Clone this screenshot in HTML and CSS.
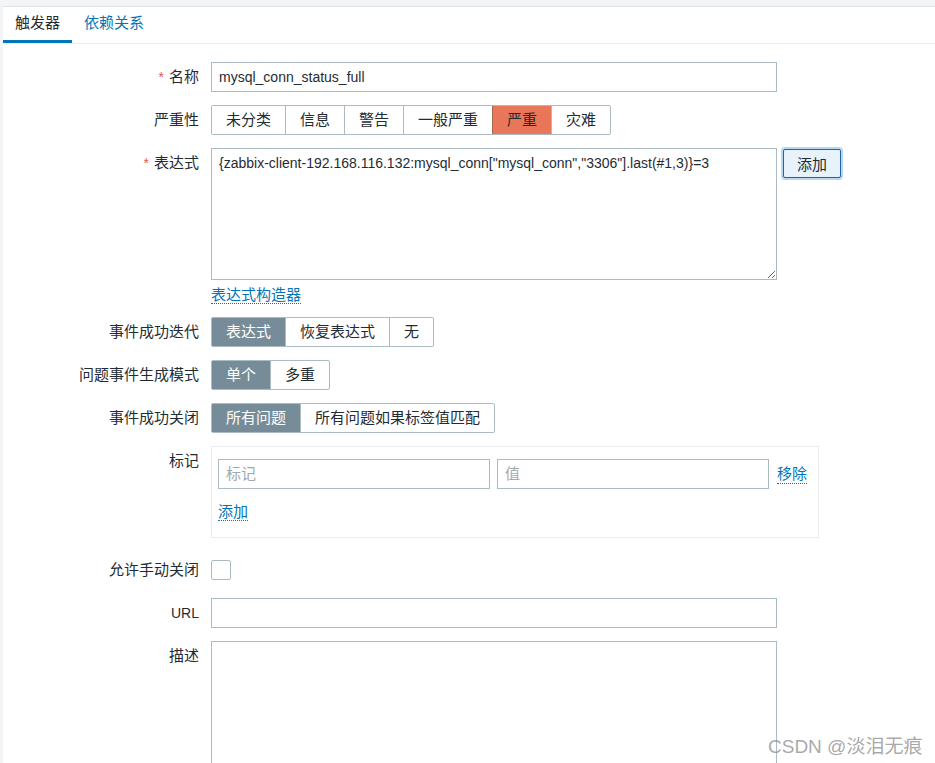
FILE: index.html
```html
<!DOCTYPE html>
<html>
<head>
    <title>触发器</title>
    <link rel="stylesheet" href="styles.css">
</head>
<body>
    <div class="panel">
        <ul class="tabs">
            <li class="tab active">触发器</li>
            <li class="tab">依赖关系</li>
        </ul>

        <div class="form">
            <div class="row">
                <label class="label required">名称</label>
                <input type="text" class="input wide" value="mysql_conn_status_full">
            </div>

            <div class="row">
                <label class="label">严重性</label>
                <div class="seg">
                    <span>未分类</span>
                    <span>信息</span>
                    <span>警告</span>
                    <span>一般严重</span>
                    <span class="high">严重</span>
                    <span>灾难</span>
                </div>
            </div>

            <div class="row row-tight">
                <label class="label required">表达式</label>
                <div class="expr">
                    <textarea class="input wide expr-text">{zabbix-client-192.168.116.132:mysql_conn["mysql_conn","3306"].last(#1,3)}=3</textarea>
                    <button class="btn-add">添加</button>
                </div>
            </div>

            <div class="row row-link">
                <span></span>
                <div><a class="link">表达式构造器</a></div>
            </div>

            <div class="row">
                <label class="label">事件成功迭代</label>
                <div class="seg">
                    <span class="on">表达式</span>
                    <span>恢复表达式</span>
                    <span>无</span>
                </div>
            </div>

            <div class="row">
                <label class="label">问题事件生成模式</label>
                <div class="seg">
                    <span class="on">单个</span>
                    <span>多重</span>
                </div>
            </div>

            <div class="row">
                <label class="label">事件成功关闭</label>
                <div class="seg">
                    <span class="on">所有问题</span>
                    <span>所有问题如果标签值匹配</span>
                </div>
            </div>

            <div class="row row-tags">
                <label class="label">标记</label>
                <div class="tags">
                    <div class="tag-line">
                        <input type="text" class="input tag-input" placeholder="标记">
                        <input type="text" class="input tag-input" placeholder="值">
                        <a class="link">移除</a>
                    </div>
                    <a class="link">添加</a>
                </div>
            </div>

            <div class="row">
                <label class="label">允许手动关闭</label>
                <div class="check-cell"><span class="check"></span></div>
            </div>

            <div class="row">
                <label class="label latin">URL</label>
                <input type="text" class="input wide">
            </div>

            <div class="row">
                <label class="label">描述</label>
                <textarea class="input wide desc"></textarea>
            </div>
        </div>
    </div>

    <div class="watermark">CSDN @淡泪无痕</div>
</body>
</html>
```

FILE: styles.css
```css
body {
    margin: 0;
    background-color: #f3f4f5;
    font-family: "Liberation Sans", "Noto Sans CJK SC", sans-serif;
    font-size: 14px;
    color: #1f2c33;
}
.panel {
    margin: 6px 0 0 3px;
    background-color: white;
    border-top: 1px solid #dfe4e7;
    min-height: 800px;
}
.tabs {
    list-style: none;
    margin: 0;
    padding: 0;
    display: flex;
    height: 36px;
    border-bottom: 1px solid #ebeef0;
}
.tab {
    padding: 0 12px;
    font-size: 15px;
    line-height: 32px;
    color: #0275b8;
    border-bottom: 3px solid transparent;
}
.tab.active {
    color: #1f2c33;
    border-bottom-color: #0275b8;
}
.form {
    padding-top: 18px;
}
.row {
    display: grid;
    grid-template-columns: 196px 1fr;
    column-gap: 12px;
    margin-bottom: 13px;
    align-items: start;
}
.row-tight {
    margin-bottom: 6px;
}
.row-link {
    margin-bottom: 13px;
}
.row-tags {
    margin-bottom: 17px;
}
.label {
    text-align: right;
    font-size: 15px;
    line-height: 30px;
    white-space: nowrap;
}
.label.latin {
    font-size: 14px;
}
.required::before {
    content: "*";
    color: #e45959;
    font-size: 14px;
    margin-right: 5px;
}
.input {
    box-sizing: border-box;
    height: 30px;
    border: 1px solid #acbbc2;
    padding: 0 7px;
    font-family: inherit;
    font-size: 14px;
    color: #1f2c33;
    background: white;
    outline: none;
}
.input::placeholder {
    color: #a0a9ae;
    font-size: 15px;
}
.wide {
    width: 566px;
}
textarea.input {
    padding: 6px 7px;
    resize: both;
}
.expr {
    display: flex;
    align-items: flex-start;
    gap: 6px;
}
.expr-text {
    height: 132px;
}
.desc {
    height: 160px;
}
.btn-add {
    margin-top: 1px;
    height: 29px;
    padding: 0 13px;
    background-color: #e8f2fb;
    border: 1px solid #1f65a6;
    border-radius: 2px;
    box-shadow: 0 0 0 2px #b7d7f3;
    font-family: inherit;
    font-size: 15px;
    color: #1f2c33;
}
.seg {
    display: inline-flex;
    justify-self: start;
    border: 1px solid #acbbc2;
    border-radius: 2px;
    height: 28px;
}
.seg span {
    padding: 0 14px;
    font-size: 15px;
    line-height: 28px;
    white-space: nowrap;
    border-left: 1px solid #acbbc2;
}
.seg span:first-child {
    border-left: none;
}
.seg .on {
    background-color: #768d99;
    color: white;
}
.seg .high {
    background-color: #e97659;
    border-left-color: #a56a5a;
}
.link {
    color: #0275b8;
    font-size: 15px;
    border-bottom: 1px dotted #0275b8;
    line-height: 18px;
    white-space: nowrap;
    cursor: pointer;
}
.tags {
    box-sizing: border-box;
    width: 608px;
    border: 1px solid #ebeef0;
    padding: 12px 10px 16px 6px;
}
.tag-line {
    display: flex;
    align-items: center;
    gap: 7px;
    margin-bottom: 14px;
}
.tag-line .link {
    margin-left: 1px;
    flex-shrink: 0;
}
.tag-input {
    width: 272px;
    flex-shrink: 0;
}
.check-cell {
    height: 30px;
    display: flex;
    align-items: center;
}
.check {
    box-sizing: border-box;
    width: 20px;
    height: 20px;
    border: 1px solid #acbbc2;
    border-radius: 2px;
}
.watermark {
    position: absolute;
    left: 768px;
    top: 731px;
    font-size: 19px;
    color: rgba(140, 140, 140, 0.75);
}
```
